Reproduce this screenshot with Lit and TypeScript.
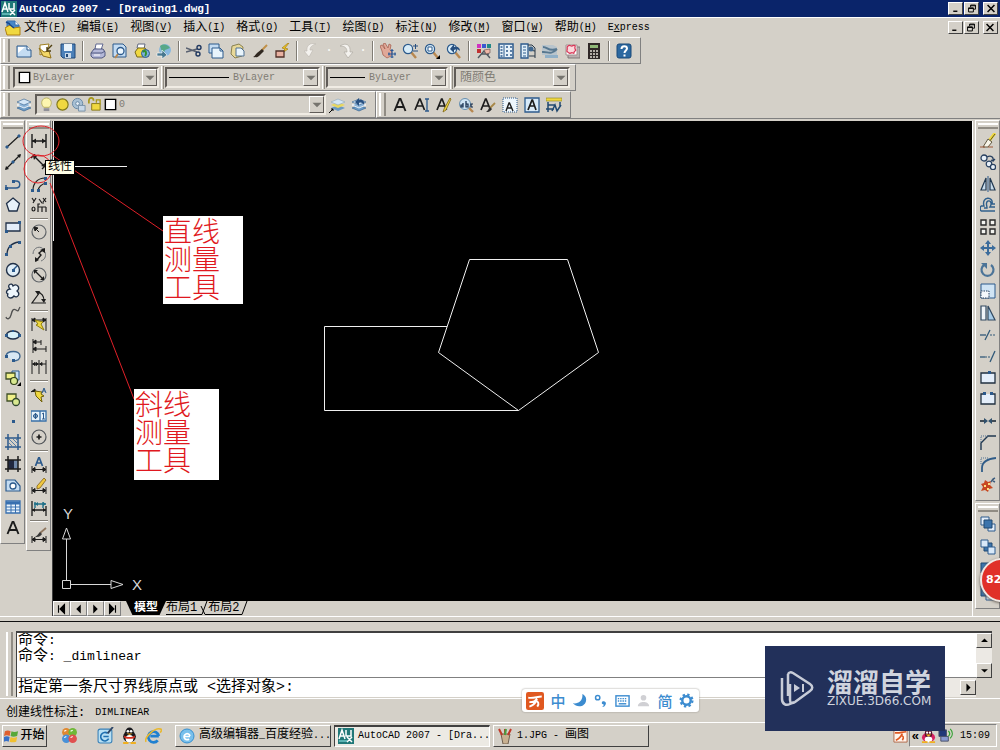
import { LitElement, html, svg, css, nothing, TemplateResult } from "lit";
import { customElement } from "lit/decorators.js";

const B = "#2c5a8c";
const L = "#c4dcf2";
const K = "#1c1c1c";
const Y = "#f0d840";

const dimBase = svg`<path d="M1 9v7M15 9v7M1 12.5h14M4 10.5l-3 2 3 2zM12 10.5l3 2-3 2z" fill="${K}" stroke="${K}"/>`;
const sheet = svg`<path d="M1 3h10l4 4v7H1z" fill="${L}" stroke="${B}"/><path d="M2 4h7l-7 6z" fill="#fff"/><path d="M11 3v4h4" fill="#fff" stroke="${B}"/>`;
const stack = svg`<path d="M1 11l7 3 7-3-7-3z" fill="#6b9ac4" stroke="${B}" stroke-width=".6"/><path d="M1 8l7 3 7-3-7-3z" fill="#8fb5d8" stroke="#fff" stroke-width=".8"/><path d="M1 5l7 3 7-3-7-3z" fill="#d4e6f6" stroke="${B}" stroke-width=".6"/>`;
const lens = svg`<path d="M9 9l5 6" stroke="#b88850" stroke-width="2.4"/><circle cx="6" cy="6" r="4.6" fill="#d8ecf8" stroke="${B}" stroke-width="1.2"/>`;
const letterA = svg`<path d="M2.500 14L7.500 2h1L13.500 14M4.500 10h7" fill="none" stroke="${K}" stroke-width="1.9"/>`;
const smallA = svg`<path d="M1 13L5.500 2h.6L10.500 13M2.800 9h6" fill="none" stroke="${K}" stroke-width="1.7"/>`;
const printer = svg`<path d="M5 6l1-5h7l-2 6z" fill="#fff" stroke="#606890"/><path d="M1 10l3-4h9l2 3v4l-3 2H3l-2-2z" fill="#b4b8d8" stroke="#505880"/><path d="M1 10h11l3-2" fill="none" stroke="#505880"/><path d="M4 12h6" stroke="#fff"/>`;

const ICONS: Record<string, TemplateResult> = {
  cad: svg`<rect width="16" height="16" fill="#207878"/><path d="M1 11L4 2l3 9M2 8h4M8 2v6h5V2M9 9l5 5M9 14l5-5" stroke="#fff" stroke-width="1.5" fill="none"/><path d="M1 13h8" stroke="#9ee"/>`,
  dwg: svg`<path d="M2 1h8l4 4v6H2z" fill="#4888c8" stroke="#3870b0"/><path d="M0 8l5-3 4 3 6-1v8H2z" fill="${Y}" stroke="#b08010"/><path d="M4 4l5 4M1 2l4 2" stroke="#184890" stroke-width="1.500"/><path d="M10 1v4h4" fill="#fff" stroke="#3870b0"/>`,
  newDoc: sheet,
  open: svg`<path d="M2 2l9-1-2 8-7 3z" fill="#fff" stroke="#a08020"/><path d="M1 5l4 8 8 2-2-7-5 1z" fill="#f4d868" stroke="#907018"/><path d="M14 2l-5 5M9 4v4h4" fill="none" stroke="#504010" stroke-width="1.4"/>`,
  save: svg`<path d="M1 1h14v14H3l-2-2z" fill="#4c80b8" stroke="#204878"/><path d="M4 1h8v7H4z" fill="#e8f2fa"/><path d="M5 10h6v5H5z" fill="#c8d8e8"/><path d="M6 11h2v3H6z" fill="#204878"/>`,
  print: printer,
  preview: svg`<path d="M1 1h10l3 3v10H1z" fill="${L}" stroke="${B}"/><path d="M6 11l-3 4" stroke="#b88850" stroke-width="2"/><circle cx="8.500" cy="8" r="3.500" fill="#eef8ff" stroke="${B}" stroke-width="1.300"/>`,
  publish: svg`<path d="M3 5l1-4h7l-1 5z" fill="#fff" stroke="#606880"/><path d="M1 9l3-4h7l2 3v4l-3 2H3z" fill="${Y}" stroke="#786818"/><circle cx="11.500" cy="10.500" r="4" fill="#7cb0dc" stroke="${B}"/><path d="M9 9c3-3 4 2 2 4" stroke="#30902c" fill="none" stroke-width="2"/>`,
  dwf: svg`<circle cx="9" cy="7" r="6" fill="#88b8e0"/><path d="M4 3c4-3 8-1 10 2l-5 2-2 5" fill="#58a888"/><path d="M1 10h5V7l5 5-5 4v-3H1z" fill="#487890" stroke="#fff" stroke-width=".6"/>`,
  cut: svg`<path d="M0 5l11 4M0 9l11-3" stroke="#586070" stroke-width="1.400"/><circle cx="13" cy="4.500" r="2" fill="none" stroke="#203860" stroke-width="1.400"/><circle cx="12" cy="11" r="2" fill="none" stroke="#203860" stroke-width="1.400"/>`,
  copy: svg`<path d="M1 1h10v9H1z" fill="${L}" stroke="${B}"/><path d="M4 5h8l3 3v7H4z" fill="#e8f4fc" stroke="${B}"/><path d="M12 5v3h3" fill="none" stroke="${B}"/>`,
  paste: svg`<path d="M2 3l7-2 4 3-1 9-7 2-4-4z" fill="#e8d898" stroke="#888050"/><path d="M6 5h5l3 3v5H6z" fill="#e8f4fc" stroke="#507090"/>`,
  match: svg`<path d="M15 2l-6 6" stroke="#c09048" stroke-width="2"/><path d="M10 6l2 2-5 5c-2 2-4 1-6 1 2-1 3-3 4-4z" fill="#302820"/>`,
  blockEdit: svg`<path d="M14 0L8 5l3 1-4 5 7-5-3-1 4-5z" fill="#f0c820" stroke="#987010" stroke-width=".6"/><path d="M2 8h8v6H2z" fill="#e8b0a0" stroke="#503028" stroke-width="1.300"/>`,
  undo: svg`<path d="M12 1C6-1 2 3 3 8H0l5 6 4-7H6c0-3 2-5 6-6z" fill="#f4f2ee" stroke="#c0bcb4" stroke-width=".7"/>`,
  redo: svg`<path d="M2 3c6-4 11-1 10 6h3l-5 6-4-6h3c0-4-2-6-7-6z" fill="#f4f2ee" stroke="#b0aca4" stroke-width=".7"/>`,
  pan: svg`<path d="M0 3l2-1 3 4-2-5 2-1 3 5 1-4 2 1-1 5 2 2-1 4-4 2-4-3-1-4z" fill="#e0a898" stroke="#a05848" stroke-width=".7"/><path d="M12 5v9M8 10h8M10.500 6.500h3M10.500 13h3M9 8.500v3M15 8.500v3" stroke="#285898" stroke-width="1.200" transform="translate(0 1)"/>`,
  zoomRt: svg`${lens}<path d="M11 3h5M13.500 1v5M11 8h5" stroke="#285080"/>`,
  zoomWin: svg`${lens}<path d="M4 4h4v4H4z" fill="#fff" stroke="${B}"/><path d="M16 12v4h-4z" fill="#000"/>`,
  zoomPrev: svg`${lens}<path d="M4 6l4-5v3c4-1 6 1 6 4-2-2-4-2-6-1v3z" fill="#285080"/>`,
  props: svg`<path d="M1 1h4v4H1z" fill="#d030c0"/><path d="M6 1h4v4H6z" fill="#3858d0"/><path d="M11 1h4v4h-4z" fill="#208888"/><path d="M1 6h4v4H1z" fill="#c03030"/><path d="M2 15l6-7 6 7M5 11h8" stroke="#505860" stroke-width="1.400" fill="none"/><path d="M8 7l6-1v4l-4 1z" fill="#f0b8a8" stroke="#604848" stroke-width=".6"/>`,
  center: svg`<path d="M1 1h14v14H1z" fill="#e8f2fa" stroke="${B}" stroke-width="1.500"/><path d="M6 2v12" stroke="${B}"/><path d="M2.500 4h2M2.500 7h2M2.500 10h2M2.500 13h2M8 4h2M12 4h2M8 8h2M12 8h2M8 12h2M12 12h2" stroke="${B}" stroke-width="1.500"/>`,
  palettes: svg`<path d="M1 1h7v14H1z" fill="#e0eef8" stroke="${B}" stroke-width="1.300"/><path d="M3 4h3M3 7h3M3 10h3M3 13h3" stroke="${B}"/><path d="M8 2h4l3 3v10M9 7l6 1M9 13h6" stroke="#283848" fill="none"/><circle cx="11" cy="6" r="2.500" fill="#406890"/>`,
  sheetset: svg`<path d="M0 2h11l4 2v8H0z" fill="#b8c4cc"/><path d="M1 4c5 0 5 5 14 2M0 9c6-1 8 4 15-3" stroke="#587890" stroke-width="2" fill="none"/><path d="M3 12h13v3H3z" fill="#90b0c8"/>`,
  markup: svg`<path d="M4 4h12v11H4z" fill="#b8b0b0" stroke="#807878"/><path d="M2 2h11v10H2z" fill="#fff" stroke="#a09090"/><path d="M4 3c2-2 3 1 4 0s4-1 3 1 2 3 0 4 0 3-2 2-3 1-4 0-3-1-2-3-1-3 1-4z" fill="#fad8dc" stroke="#d83858" stroke-width="1.300"/>`,
  calc: svg`<path d="M2 0h12v16H2z" fill="#302828"/><path d="M4 2h8v3H4z" fill="#90b878"/><path d="M4 8h8M4 11h8M4 14h8" stroke="#e0d8d0" stroke-width="1.600" stroke-dasharray="2 1"/>`,
  help: svg`<rect x="1" y="1" width="14" height="14" rx="2" fill="#2c68a0" stroke="#184878"/><path d="M5.500 6c0-4 5.500-3.500 5.500-.5 0 2-2.500 2-2.500 4.500M8.500 11.500v2" fill="none" stroke="#fff" stroke-width="2"/>`,
  layers: stack,
  layerPrev: svg`${stack}<path d="M4 5l4-4v2c4-1 6 2 5 5-1-2-3-3-5-2v3z" fill="#285080"/>`,
  layerCur: svg`<path d="M2 11l7 3 7-3-7-3z" fill="#6b9ac4"/><path d="M2 8l7 3 7-3-7-3z" fill="#e8d860"/><path d="M2 5l7 3 7-3-7-3z" fill="#d4e6f6" stroke="#90a8b8" stroke-width=".6"/><path d="M0 16l4-4M2 12h2v2" stroke="#000" fill="none"/>`,
  bulb: svg`<path d="M5 11C1 7 3 1 8 1s7 6 3 10z" fill="#fdf6b0" stroke="#b8b060"/><path d="M5 12h6v3H5z" fill="#909098"/>`,
  sun: svg`<circle cx="8" cy="8" r="6" fill="${Y}" stroke="#807818" stroke-width="1.200"/>`,
  freeze: svg`<circle cx="7" cy="7" r="5.500" fill="#a8c0d4" stroke="#6888a4"/><circle cx="7" cy="7" r="2" fill="#e8f0f8" stroke="#6888a4"/><path d="M8 9h7v6H8z" fill="#c8d8e8" stroke="#7890a8"/>`,
  lock: svg`<path d="M2 7V4c0-4 5-4 5 0" fill="none" stroke="#a89818" stroke-width="1.800"/><path d="M5 7h9v7H5z" fill="${Y}" stroke="#887818"/><path d="M10 6V3h4v5" fill="none" stroke="#a89818" stroke-width="1.400"/>`,
  white: svg`<path d="M2.500 2.500h11v11h-11z" fill="#fff" stroke="#000" stroke-width="1.500"/>`,
  mtext: letterA,
  dtext: svg`${smallA}<path d="M11 2h4M13 2v12M11 14h4" stroke="${B}" fill="none" stroke-width="1.300"/>`,
  editText: svg`${smallA}<path d="M14 1L8 12l-1 3 3-2 5-11z" fill="${Y}" stroke="#806818" stroke-width=".8"/>`,
  findText: svg`<path d="M10 10l5 5" stroke="#b88850" stroke-width="2.400"/><circle cx="7" cy="7" r="5.500" fill="#d0e4f4" stroke="#6890b0"/><path d="M5 6v4H3V8h2M8 4v6h2V7H8M15 7h-2v3h2" stroke="#102848" stroke-width="1.200" fill="none"/>`,
  styleText: svg`${smallA}<path d="M15 6l-5 5" stroke="#a88848" stroke-width="1.800"/><path d="M10 10l2 2c-2 3-4 3-6 3 2-1 2-3 4-5z" fill="#303030"/>`,
  scaleText: svg`<path d="M1 1h14v14H1z" fill="#eef6fc" stroke="${B}" stroke-dasharray="1 1"/><path d="M4 14l3-8h.5L11 14M5 11h5" stroke="${K}" fill="none" stroke-width="1.400"/>`,
  justText: svg`<path d="M1 1h14v14H1z" fill="#d8eaf8" stroke="${B}" stroke-width="1.300"/><path d="M4 13l4-10h.5L12 13M5 9h6" stroke="${K}" fill="none" stroke-width="1.700"/>`,
  convText: svg`<path d="M0 1h16v3H0z" fill="${Y}" stroke="#888020" stroke-width=".6"/><path d="M2 5v10M14 5v4M2 8h7M0 12h8M6 14l3-6 2 6 4-6" stroke="#204870" stroke-width="1.500" fill="none"/>`,
  line: svg`<path d="M2 14L14 3" stroke="${K}" stroke-width="1.200"/><path d="M1 13h2v2H1zM13 2h2v2h-2z" fill="${B}" stroke="${B}"/>`,
  xline: svg`<path d="M1 15L15 1" stroke="${K}" stroke-width="1.200"/><path d="M0 16l1-4 3 3zM16 0l-1 4-3-3z" fill="${K}"/><path d="M7 7h2v2H7z" fill="${B}" stroke="${B}"/>`,
  pline: svg`<path d="M1 12h10c5 0 5-7 0-7H8M1 12V9" fill="none" stroke="${B}" stroke-width="1.500"/><path d="M0 11h3v3H0zM7 4h3v3H7z" fill="${B}"/>`,
  polygon: svg`<path d="M8 1l6.500 5.500L12 14H4L1.500 6.500z" fill="#e8f2fa" stroke="#203048" stroke-width="1.300"/>`,
  rect: svg`<path d="M1 4h14v8H1z" fill="#e4eefa" stroke="#203048" stroke-width="1.300"/><path d="M0 11h3v3H0zM13 2h3v3h-3z" fill="${B}"/>`,
  arc: svg`<path d="M2 15C2 7 7 3 14 2" fill="none" stroke="#203048" stroke-width="1.300"/><path d="M0 13h3v3H0zM4 5h3v3H4zM13 1h3v3h-3z" fill="${B}"/>`,
  circle: svg`<circle cx="8" cy="8" r="6.500" fill="#e0eef8" stroke="#203048" stroke-width="1.400"/><path d="M8 8l4-4" stroke="${B}" stroke-width="1.400"/><path d="M7 7h3v3H7z" fill="${B}"/>`,
  cloud: svg`<path d="M5 6C1 2 7-1 8 3c4-3 8 2 4 5 4 3 0 8-3 5-3 4-8 1-6-2-3-1-1-5 2-5z" fill="#eef6fc" stroke="#203048" stroke-width="1.300"/>`,
  spline: svg`<path d="M1 12c1 3 4 2 5-2s2-7 5-5 2 0 4-3" fill="none" stroke="#505050" stroke-width="1.300"/>`,
  ellipse: svg`<ellipse cx="8" cy="8" rx="6.500" ry="4" fill="#d8f0f8" stroke="#203048" stroke-width="1.400"/><path d="M0 7h3v3H0zM13 7h3v3h-3zM7 3h2v2H7z" fill="${B}"/>`,
  earc: svg`<path d="M1 8c1-6 14-6 14 0 0 4-4 5-7 5" fill="#d8e8f4" stroke="#406890" stroke-width="1.400"/><path d="M0 7h3v3H0zM7 11h3v3H7z" fill="${B}"/>`,
  insert: svg`<path d="M7 1h7v9H7z" fill="${L}" stroke="${B}"/><path d="M1 3h9v6H1z" fill="#f0f088" stroke="#405028" stroke-width="1.300"/><circle cx="9" cy="11" r="3.500" fill="#d8e890" stroke="#304018" stroke-width="1.200"/><path d="M16 12v4h-4z" fill="#000"/>`,
  block: svg`<path d="M2 3h9v7H2z" fill="#f0f088" stroke="#405028" stroke-width="1.300"/><circle cx="11" cy="11" r="3.500" fill="#d8e890" stroke="#304830" stroke-width="1.300"/>`,
  point: svg`<path d="M7 7h3v3H7z" fill="${B}"/>`,
  hatch: svg`<path d="M3 0v16M13 0v16M0 4h16M0 13h16" stroke="${B}" stroke-width="1.500"/><path d="M4 5l8 8M4 9l4 4M8 5l5 5M11 5l2 2" stroke="#5880a8"/>`,
  gradient: svg`<path d="M3 4h10v9H3z" fill="#7088a8"/><path d="M3 4h6v9H3z" fill="#202840"/><path d="M3 0v16M13 0v16M0 4h16M0 13h16" stroke="${K}" stroke-width="1.500"/>`,
  region: svg`<path d="M1 3h9l5 6v5H1z" fill="${L}" stroke="${B}" stroke-width="1.200"/><circle cx="8" cy="9" r="3" fill="#fff" stroke="${B}" stroke-width="1.300"/>`,
  table: svg`<path d="M1 2h14v12H1z" fill="#eaf4fc" stroke="#3870b0" stroke-width="1.300"/><path d="M1 4h14" stroke="#3870b0" stroke-width="3"/><path d="M1 8h14M1 11h14M6 3v11M10.500 3v11" stroke="#3870b0"/>`,
  dimLin: svg`<path d="M1 1v14M15 1v14M1 8h14" stroke="${K}" stroke-width="1.400"/><path d="M1 8l4-2.500v5zM15 8l-4-2.500v5z" fill="${K}"/>`,
  dimAli: svg`<path d="M3 2l10 10M0 4l4-4M11 15l5-5" stroke="${K}" stroke-width="1.400"/><path d="M2 2h4L3 6zM14 13v-4l-4 3z" fill="${K}"/>`,
  dimArc: svg`<path d="M2 14C2 7 7 2 14 2M7 15c0-4 4-7 8-8" fill="none" stroke="${K}" stroke-width="1.200"/><path d="M0 13h3v3H0zM6 13h3v3H6zM13 1h3v3h-3zM13 6h3v3h-3z" fill="${B}"/>`,
  dimOrd: svg`<path d="M1 1l2 3M5 1L2 6M12 1l3 4M15 1l-3 4M1 12a1.500 2 0 1 0 3 0a1.500 2 0 1 0-3 0M7 15V7h2M8 2l3 4h2M7 10h8M11 15v-5M15 15v-5" fill="none" stroke="${K}" stroke-width="1.200"/>`,
  dimRad: svg`<circle cx="8" cy="8" r="7" fill="none" stroke="#606468" stroke-width="1.200"/><path d="M3 3l5 5M3 3l4 1-3 3z" fill="${K}" stroke="${K}"/>`,
  dimJog: svg`<path d="M2 8C2 1 10-1 13 4M10 15c5-2 5-6 4-9" fill="none" stroke="#707478"/><path d="M13 3L8 7l2 2-5 6" fill="none" stroke="${K}" stroke-width="1.400"/><path d="M14 2v5L9 4zM4 16v-5l4 3z" fill="${K}"/>`,
  dimDia: svg`<circle cx="8" cy="8" r="7" fill="none" stroke="#606468" stroke-width="1.200"/><path d="M4 4l8 8" stroke="${K}" stroke-width="1.300"/><path d="M3 3h4L3 7zM13 13H9l4-4z" fill="${K}"/>`,
  dimAng: svg`<path d="M9 3L1 14h14M6 3c6 1 7 5 7 9" fill="none" stroke="${K}" stroke-width="1.200"/><path d="M4 2l5 0-2 4zM13 14l-3-4h5z" fill="${K}"/>`,
  dimQuick: svg`<path d="M1 2v13M15 2v13M1 4h14M1 4l3-2v4zM15 4l-3-2v4z" fill="${K}" stroke="${K}"/><path d="M4 4l8 2-2 2 3 6-8-5 2-1z" fill="${Y}" stroke="#908010"/>`,
  dimBase: svg`<path d="M2 1v14M10 2v5M15 8v6M2 4h8M2 11h13M2 4l3-2v4zM2 11l3-2v4z" fill="${K}" stroke="${K}"/>`,
  dimCont: svg`<path d="M1 1v14M8 1v14M15 1v14M1 5h14M2 5l2-1.500v3zM7 5L5 3.500v3zM9 5l2-1.500v3z" fill="${K}" stroke="${K}"/>`,
  leader: svg`<path d="M0 5l4-3v2l4 1" fill="${K}" stroke="${K}"/><path d="M4 4l7 1-1 2 3 2-3 1 1 5-6-6z" fill="${Y}" stroke="#706008"/><path d="M11 6l2-5 2 5M12 4h2" stroke="${B}" fill="none"/>`,
  tol: svg`<path d="M0 3h15v10H0zM9 3v10" fill="#e8f2fa" stroke="#3870a8" stroke-width="1.300"/><circle cx="4.500" cy="8" r="2" fill="none" stroke="${B}"/><path d="M4.500 5v6M2 8h5M11 6l1.500-1v6M11 11h3" stroke="${B}" fill="none"/>`,
  mark: svg`<circle cx="8" cy="8" r="7" fill="none" stroke="#505458" stroke-width="1.200"/><path d="M8 5.500v5M5.500 8h5" stroke="${K}" stroke-width="1.700"/>`,
  dimEdit: svg`${dimBase}<path d="M4.500 9L8 0l3.500 9M6 6h4" stroke="${B}" stroke-width="1.700" fill="none"/>`,
  dimTedit: svg`${dimBase}<path d="M13 0L6 8v3l3-1 6-8z" fill="#f0c840" stroke="#705010" stroke-width=".7"/>`,
  dimUpd: svg`<path d="M4 2v6M12 2v6M3 4h12" stroke="#207088" stroke-width="1.400"/><path d="M4 4l3-2v4zM15 4l-3-2v4z" fill="#207088"/><path d="M1 1v15M15 6v10M1 10h14" stroke="${K}" stroke-width="1.300"/><path d="M1 10l3-2v4zM15 10l-3-2v4z" fill="${K}"/>`,
  dimStyle: svg`${dimBase}<path d="M15 1L9 6" stroke="#907860" stroke-width="1.800"/><path d="M9 5l2 2c-2 3-4 3-7 3 2-1 3-3 5-5z" fill="#383838"/>`,
  erase: svg`<path d="M15 0l-6 8" stroke="${Y}" stroke-width="3"/><path d="M15 1l-6 8" stroke="#605820"/><path d="M8 6l4 3-4 5H3z" fill="#f8f4e8" stroke="#605840"/><path d="M0 14h16" stroke="#a05838" stroke-dasharray="5 3"/>`,
  mcopy: svg`<circle cx="4" cy="4" r="3" fill="#e8f0f8" stroke="#284060" stroke-width="1.300"/><circle cx="9" cy="10" r="2.800" fill="#e8f0f8" stroke="#284060" stroke-width="1.200"/><circle cx="13" cy="13" r="2.600" fill="#e8f0f8" stroke="#284060" stroke-width="1.300"/><path d="M7 3c4-2 7 0 6 4l-2-1M13 7l2-2" stroke="#284060" stroke-width="1.300" fill="none"/>`,
  mirror: svg`<path d="M6 2v12H1zM10 2v12h5z" fill="#c8dcec" stroke="#203850" stroke-width="1.200"/><path d="M8 0v16" stroke="${B}"/>`,
  offset: svg`<path d="M1 9h3C1-1 14-1 12 7h3M1 14h14M1 9c-1 1-1 4 0 5M4 11h3c0-3-2-6 1-7s4 3 2 6h5" fill="none" stroke="#30608c" stroke-width="1.400"/>`,
  array: svg`<path d="M1 1h5v5H1zM10 1h5v5h-5zM1 10h5v5H1zM10 10h5v5h-5z" fill="#f4f4f0" stroke="#282828" stroke-width="1.400"/>`,
  move: svg`<path d="M8 0l3 4H9v3h3V5l4 3-4 3V9H9v3h2l-3 4-3-4h2V9H4v2L0 8l4-3v2h3V4H5z" fill="#3c6c9c"/>`,
  rotate: svg`<path d="M4 3a6 6 0 1 0 7 0" fill="none" stroke="#4c7498" stroke-width="2.200"/><path d="M1 1h6v6z" fill="#4c7498"/>`,
  scale: svg`<path d="M1 1h14v14H1z" fill="#d0e4f4" stroke="${B}"/><path d="M1 8h8v7H1z" fill="#f4f8fc" stroke="#284060" stroke-dasharray="1.500 1"/>`,
  stretch: svg`<path d="M1 1h5v14H1z" fill="#f0f4f8" stroke="#304860" stroke-width="1.200"/><path d="M8 1l7 14H8z" fill="#a8cce8" stroke="#304860" stroke-width="1.200"/>`,
  trim: svg`<path d="M0 8h6" stroke="#305878" stroke-width="1.300"/><path d="M10 8h6" stroke="#305878" stroke-dasharray="2 1"/><path d="M10 3L5 13" stroke="#305878" stroke-width="1.300"/>`,
  extend: svg`<path d="M0 9h5" stroke="#305878" stroke-width="1.300"/><path d="M5 9h6" stroke="#305878" stroke-dasharray="2 1"/><path d="M15 3l-5 11" stroke="#305878" stroke-width="1.300"/>`,
  breakPt: svg`<path d="M1 3h14v10H1z" fill="#e4eefa" stroke="#203040" stroke-width="1.300"/><path d="M8 1h3v3H8z" fill="${B}"/>`,
  breakIt: svg`<path d="M4 3H1v10h14V3h-3" fill="#e4eefa" stroke="#203040" stroke-width="1.300"/><path d="M3 1h3v3H3zM10 1h3v3h-3z" fill="${B}"/>`,
  join: svg`<path d="M0 8h6M10 8h6" stroke="#102030" stroke-width="1.500"/><path d="M4 5l4 3-4 3zM12 5L8 8l4 3z" fill="#30506c"/>`,
  chamfer: svg`<path d="M1 16V9l7-7h8" fill="none" stroke="#203850" stroke-width="1.400"/><path d="M1 8V2h7" fill="none" stroke="#507090" stroke-dasharray="1 1"/>`,
  fillet: svg`<path d="M2 16V12c0-6 4-9 14-10" fill="none" stroke="#305c88" stroke-width="1.800"/><path d="M1 8V2h7" fill="none" stroke="#507090" stroke-dasharray="1 1"/>`,
  explode: svg`<path d="M1 7l3-1 1-3 3 2 3-1-1 4 3 3-4 1-1 3-3-2-4 1 2-4z" fill="#c84820"/><path d="M4 8h2v2H4zM8 6h2v2H8zM7 11h2v2H7z" fill="#ffe080"/><path d="M11 5l2-3 2-1M13 4l2 1" stroke="#406080" stroke-width="1.500"/>`,
  front: svg`<path d="M1 1h8v8H1zM8 8h7v7H8z" fill="#e4eefa" stroke="${B}"/><path d="M4 4h8v8H4z" fill="#3c74ac" stroke="#204870"/>`,
  back: svg`<path d="M4 4h8v8H4z" fill="#3c74ac" stroke="#204870"/><path d="M1 1h7v7H1zM8 8h7v7H8z" fill="#d8e8f8" stroke="${B}"/>`,
  above: svg`<path d="M1 1h12v10H1z" fill="#3c74ac" stroke="#204870"/><path d="M6 8h9v7H6z" fill="#d8e8f8" stroke="${B}"/>`,
  winStart: svg`<path d="M1 3c2-1 4-1 6 0L6 8c-2-1-4-1-6 0z" fill="#e06030"/><path d="M8 3c2 1 4 1 7 0l-1 5c-3 1-5 1-7 0z" fill="#58a838"/><path d="M0 9c2-1 4-1 6 0l-1 5c-2-1-3-1-5 0z" fill="#3870c8"/><path d="M7 9c2 1 4 1 7 0l-1 5c-3 1-5 1-7 0z" fill="#f0c030"/>`,
  balls: svg`<circle cx="5" cy="5" r="4" fill="#e08830"/><circle cx="11" cy="5" r="4" fill="#70b838"/><circle cx="5" cy="11" r="4" fill="#4890d8"/><circle cx="11" cy="11" r="4" fill="#e05050"/><path d="M3 4l2-1M9 4l2-1M3 10l2-1M9 10l2-1" stroke="#fff"/>`,
  desktop: svg`<rect x="1" y="2" width="13" height="13" rx="2" fill="#b8e0f4" stroke="#3880b8"/><path d="M10 6a4 4 0 1 0 1 5M6 9h5" fill="none" stroke="#2070b0" stroke-width="1.500"/><path d="M15 0l-5 6" stroke="#304868" stroke-width="1.800"/>`,
  qq: svg`<ellipse cx="8" cy="9" rx="6" ry="5.500" fill="#18181c"/><ellipse cx="8" cy="5" rx="4" ry="4.500" fill="#18181c"/><ellipse cx="8" cy="11" rx="3.600" ry="3.500" fill="#fff"/><circle cx="6.500" cy="4" r="1.200" fill="#fff"/><circle cx="9.500" cy="4" r="1.200" fill="#fff"/><path d="M5 6h6l-3 1.500z" fill="#f0a820"/><path d="M3 8c3 2 7 2 10 0v2c-3 1.500-7 1.500-10 0z" fill="#d83020"/><path d="M2 14h5v2H2zM9 14h5v2H9z" fill="#f0b020"/>`,
  qqTray: svg`<ellipse cx="8" cy="10" rx="7" ry="5" fill="#d82060"/><ellipse cx="8" cy="6" rx="4" ry="5" fill="#58102c"/><ellipse cx="8" cy="12" rx="4" ry="3" fill="#fff"/><circle cx="6.500" cy="5" r="1.200" fill="#fff"/><circle cx="9.500" cy="5" r="1.200" fill="#fff"/><path d="M5 7h6l-3 2z" fill="#f8c020"/><path d="M1 14h6v2H1zM9 14h6v2H9z" fill="#f0b020"/>`,
  ie: svg`<path d="M13 8.500H5M13 8.500a5 5 0 1 0-1 4" fill="none" stroke="#2080d0" stroke-width="2.600"/><path d="M1 14C-1 10 9 0 15 2c1 1 0 3-1 3" fill="none" stroke="#e8b830" stroke-width="1.500"/>`,
  ebrowser: svg`<circle cx="8" cy="8" r="7" fill="#78c0ec" stroke="#3890d0"/><path d="M11 8.500H5M11 8a3 3 0 1 0-1 3" fill="none" stroke="#fff" stroke-width="1.700"/>`,
  paint: svg`<path d="M4 6h9l-2 10H6z" fill="#c8b090" stroke="#706050"/><path d="M5 7L2 1M8 7V1M11 7l3-6" stroke-width="2" stroke="#c03828"/><path d="M8 7l1-6" stroke="#48a040" stroke-width="2"/>`,
  sogou: svg`<rect width="16" height="16" rx="2" fill="#e05820"/><path d="M2 5c4 1 8-1 12-1M3 9c4 0 5-1 7-3M8 8c3 0 4 2 2 5M3 13c3-1 5-3 6-5" stroke="#fff" stroke-width="1.700" fill="none"/>`,
  sogouTray: svg`<path d="M1 1h14v14H1z" fill="#fff4ec" stroke="#b06848"/><path d="M2 5c4 1 8-1 12-1M3 13c3-1 5-3 7-7M8 8c3 0 4 2 2 5" stroke="#e05820" stroke-width="1.700" fill="none"/>`,
  moon: svg`<path d="M11 1c1 7-4 11-10 10 5 6 15 3 14-5 0-2-2-4-4-5z" fill="#3c8cd0"/>`,
  punct: svg`<circle cx="5" cy="5" r="2.300" fill="none" stroke="#3c8cd0" stroke-width="1.600"/><path d="M10 9c3-1 5 2 3 4-1 2-3 2-3 1 1 0 2-1 1-2-2 0-2-2-1-3z" fill="#3c8cd0"/>`,
  keys: svg`<rect x="1" y="3" width="14" height="11" fill="none" stroke="#3c8cd0" stroke-width="1.500"/><path d="M3 6h10M3 8.500h10" stroke="#3c8cd0" stroke-width="1.500" stroke-dasharray="1.500 1"/><path d="M4 11.500h8" stroke="#3c8cd0" stroke-width="1.500"/>`,
  person: svg`<circle cx="8" cy="5" r="3" fill="#d0d0d4"/><path d="M2 14c0-6 12-6 12 0z" fill="#d0d0d4"/>`,
  gear: svg`<circle cx="8" cy="8" r="6.300" fill="none" stroke="#3c8cd0" stroke-width="2.400" stroke-dasharray="2.500 2.450"/><circle cx="8" cy="8" r="4.500" fill="none" stroke="#3c8cd0" stroke-width="2.600"/>`,
  net: svg`<path d="M1 2h8v7H1z" fill="#203878" stroke="#485068"/><path d="M3 9h8v5H3z" fill="#8898d0" stroke="#485068"/><path d="M11 3c2 2 2 4 0 6M13 1c3 3 3 7 0 10" fill="none" stroke="#30a030" stroke-width="1.300"/>`,
  min: svg`<path d="M4 12h6" stroke="#000" stroke-width="2"/>`,
  restore: svg`<path d="M6 3h7v6h-2M6 3v3M3 7h7v6H3zM3 8h7M6 4h7" fill="none" stroke="#000" stroke-width="1.400"/>`,
  close: svg`<path d="M3 3l10 10M13 3L3 13" stroke="#000" stroke-width="2.200"/>`,
  first: svg`<path d="M4 3v10M12 2L6 8l6 6z" stroke="#000" stroke-width="1.500"/>`,
  prev: svg`<path d="M11 2L5 8l6 6z"/>`,
  next: svg`<path d="M5 2l6 6-6 6z"/>`,
  last: svg`<path d="M12 3v10M4 2l6 6-6 6z" stroke="#000" stroke-width="1.500"/>`,
  up: svg`<path d="M3 10l5-5 5 5z"/>`,
  down: svg`<path d="M3 6l5 5 5-5z"/>`,
  dim: svg`<path d="M2 5l6 6 6-6z" fill="#76746e"/>`,
};

const icon = (name: string) =>
  html`<svg class="icon" viewBox="0 0 16 16" aria-hidden="true">${ICONS[name]}</svg>`;

const STANDARD = "newDoc open save | print preview publish dwf | cut copy paste match blockEdit | undo . redo . | pan zoomRt zoomWin zoomPrev | props center palettes sheetset markup calc | help";
const TEXT = "mtext dtext editText findText styleText scaleText justText convText";
const DRAW = "line xline pline polygon rect arc circle cloud spline ellipse earc insert block point hatch gradient region table mtext";
const DIMENSION = "dimLin dimAli dimArc dimOrd | dimRad dimJog dimDia dimAng | dimQuick dimBase dimCont | leader tol mark | dimEdit dimTedit dimUpd | dimStyle";
const MODIFY = "erase mcopy mirror offset array move rotate scale stretch trim extend breakPt breakIt join chamfer fillet explode";
const ORDER = "front back above above";

const MENU = [
  ["文件", "F"], ["编辑", "E"], ["视图", "V"], ["插入", "I"], ["格式", "O"], ["工具", "T"],
  ["绘图", "D"], ["标注", "N"], ["修改", "M"], ["窗口", "W"], ["帮助", "H"],
];

@customElement("app-root")
export class AppRoot extends LitElement {
  static styles = css`
    * { box-sizing: border-box; }
    :host {
      display: flex; flex-direction: column; position: relative;
      height: 100vh; overflow: hidden; background: #d4d0c8; color: #000;
      font: 12px/14px "Liberation Mono", "Noto Sans CJK SC", monospace;
    }
    button, select, input { font: inherit; color: inherit; margin: 0; padding: 0; border: 0; background: none; border-radius: 0; }
    button { display: flex; align-items: center; justify-content: center; }
    .icon { display: block; width: 16px; height: 16px; flex: none; }
    .latin { font-size: 10px; }
    .title { display: flex; align-items: center; height: 17px; padding: 0 2px 0 1px; gap: 2px; background: #0a246a; color: #fff; flex: none; }
    .title h1 { font: bold 11px/16px "Liberation Mono", monospace; margin: 0; flex: 1; white-space: pre; }
    .wins { display: flex; gap: 1px; }
    .win { width: 15px; height: 13px; background: #d4d0c8; border: 1px solid; border-color: #fff #404040 #404040 #fff; }
    .win .icon { width: 12px; height: 11px; }
    .win:last-child { margin-left: 3px; }
    .menu { display: flex; align-items: center; height: 20px; padding: 0 2px 0 5px; border-top: 1px solid #fff; flex: none; }
    .menu nav { display: flex; flex: 1; gap: 10px; padding-left: 3px; }
    .menu button { white-space: nowrap; padding-right: 1px; }
    .menu u { text-underline-offset: 1px; }
    .row { display: flex; height: 27px; flex: none; }
    .bar { display: flex; align-items: center; border: 1px solid; border-color: #fff #808080 #808080 #fff; padding-right: 5px; }
    .grip { width: 7px; align-self: stretch; margin: 1px 3px 1px 2px; border: solid; border-width: 0 2px; border-color: #fff #908c84 #908c84 #fff; border-style: double; flex: none; }
    .grip.slim { width: 3px; margin: 1px 1px 1px 2px; border-width: 0 1px; border-style: solid; }
    .tool { width: 22px; height: 22px; flex: none; }
    .dot { width: 12px; text-align: center; color: #f8f8f4; font-weight: bold; flex: none; }
    .sep { width: 1px; height: 20px; margin: 0 4px 0 3px; background: #807c74; box-shadow: 1px 0 #fff; flex: none; }
    .combo { display: flex; align-items: center; height: 21px; padding-left: 2px; gap: 1px; border: 2px solid; border-color: #605c58 #f0ece4 #f0ece4 #605c58; color: #807c74; flex: none; }
    .combo select { appearance: none; flex: 1; min-width: 0; opacity: 1; color: #807c74; font-size: 10px; line-height: 14px; }
    .combo.c-plot select { font-size: 12px; padding-left: 2px; }
    .combo .icon { width: 15px; height: 15px; }
    .drop { width: 15px; align-self: stretch; background: #d4d0c8; border: 1px solid; border-color: #fff #605c58 #605c58 #fff; display: flex; align-items: center; justify-content: center; }
    .combo .drop .icon { width: 12px; height: 12px; }
    .rule { height: 1px; background: #000; flex: none; }
    .c-color { width: 146px; }
    .c-type { width: 155px; }
    .c-weight { width: 122px; }
    .c-plot { width: 116px; }
    .c-layer { width: 291px; }
    .r-type { width: 60px; margin-right: 3px; }
    .r-weight { width: 35px; margin-right: 3px; }
    .work { position: relative; display: flex; flex: 1; min-height: 0; padding-top: 1px; border-top: 1px solid #808080; overflow: hidden; }
    .vbar { display: flex; flex-direction: column; align-items: center; width: 25px; border: 1px solid; border-color: #fff #808080 #808080 #fff; padding-bottom: 4px; }
    .vbar .tool { flex: 1; height: auto; min-height: 0; }
    .vbar .sep { width: 18px; height: 1px; margin: 2px 0 3px; box-shadow: 0 1px #fff; }
    .vbar .grip { width: 20px; height: 6px; margin: 2px 0 1px; border-width: 2px 0; align-self: center; }
    .draw { height: 424px; }
    .dims { height: 431px; margin-left: 1px; }
    .modify { height: 381px; }
    .order { height: 106px; margin-top: 2px; }
    .right { margin-left: 2px; width: 25px; flex: none; }
    .view { display: flex; flex-direction: column; flex: 1; min-width: 0; margin: 1px 0 0 1px; border-left: 1px solid #404040; border-right: 1px solid #fff; }
    .canvas { flex: 1; width: 100%; min-height: 0; display: block; background: #000; }
    .axis { font: 15px "Liberation Sans", sans-serif; fill: #d8d8d8; }
    .tabs { display: flex; height: 15px; flex: none; }
    .nav { width: 17px; height: 15px; border: 1px solid; border-color: #fff #808080 #808080 #fff; }
    .nav .icon { width: 13px; height: 12px; }
    .model { width: 40px; margin-left: 5px; background: #000; color: #fff; height: 14px; font-weight: bold; clip-path: polygon(0 0, 100% 0, 84% 100%, 16% 100%); }
    .tab { height: 14px; border-bottom: 1px solid #000; white-space: nowrap; }
    .slant { width: 11px; height: 14px; }
    .notes { position: absolute; left: 0; top: 0; width: 100%; height: 100%; pointer-events: none; }
    .note { position: absolute; margin: 0; padding: 0 1px; background: #fff; color: #e01820; font: 300 28px/28px "Noto Sans CJK SC", sans-serif; }
    .note-a { left: 163px; top: 97px; width: 80px; height: 88px; }
    .note-b { left: 134px; top: 270px; width: 85px; height: 91px; }
    .tip { position: absolute; left: 45px; top: 41px; height: 15px; padding: 0 2px; border: 1px solid #000; background: #ffffe8; line-height: 13px; }
    .badge { position: absolute; right: -24px; bottom: 14px; width: 44px; height: 44px; border-radius: 50%; border: 2px solid #f0e8e4; background: #e03028; color: #fff; font: bold 11px/40px "DejaVu Sans", sans-serif; padding-left: 4px; box-shadow: 0 1px 3px #605850; }
    .command { display: flex; height: 82px; padding: 10px 8px 0 6px; border-top: 1px solid #fff; flex: none; position: relative; box-shadow: inset 0 4px #d4d0c8, inset 0 5px #101010; }
    .command .grip { width: 7px; margin: 5px 3px 2px 0; }
    .box { flex: 1; display: grid; grid-template-columns: 1fr 16px; grid-template-rows: 45px 19px; align-self: end; margin-bottom: 1px; border: 1px solid #404040; border-width: 2px 0 0 1px; background: #fff; font-size: 15px; line-height: 16px; }
    .history { padding-left: 1px; border-bottom: 1px solid #808080; overflow: hidden; }
    .history p, .prompt { margin: 0; white-space: pre; }
    .mono { font-size: 13px; }
    .prompt { display: flex; padding-left: 1px; line-height: 18px; align-items: center; }
    .prompt label { flex: none; }
    .prompt input { flex: 1; min-width: 0; height: 16px; outline: none; }
    .vscroll { display: flex; flex-direction: column; justify-content: space-between; background: #ece9e4; }
    .arrow { width: 16px; height: 15px; background: #d4d0c8; border: 1px solid; border-color: #fff #404040 #404040 #fff; }
    .arrow .icon { width: 11px; height: 11px; }
    .hscroll { display: flex; align-items: center; justify-content: flex-end; align-self: stretch; width: 34px; background: #ece9e4; }
    .blank { background: #d4d0c8; }
    .status { display: flex; align-items: center; gap: 10px; height: 24px; padding: 4px 6px 0; border-top: 1px solid #fff; flex: none; }
    .taskbar { display: flex; align-items: center; height: 28px; padding: 0 3px 2px 2px; border-top: 1px solid #fff; flex: none; }
    .start { width: 45px; height: 22px; gap: 1px; border: 1px solid; border-color: #fff #404040 #404040 #fff; font-weight: 500; white-space: nowrap; }
    .start .icon { width: 15px; }
    .quick { display: flex; align-items: center; gap: 7px; margin-left: 10px; padding: 0 13px 0 0; }
    .quick .icon { width: 17px; height: 17px; }
    .quick button:first-child { margin: 0 12px 0 4px; }
    .tasks { display: flex; gap: 3px; flex: 1; min-width: 0; }
    .task { width: 156px; height: 22px; gap: 4px; padding-left: 3px; justify-content: flex-start; white-space: nowrap; overflow: hidden; border: 1px solid; border-color: #fff #404040 #404040 #fff; }
    .task.on { background: #eceae4; border-color: #404040 #fff #fff #404040; border-top-width: 2px; }
    .tray { display: flex; align-items: center; gap: 1px; height: 23px; }
    .well { display: flex; align-items: center; gap: 2px; height: 23px; padding: 0 6px 0 2px; border: 1px solid; border-color: #808080 #fff #fff #808080; }
    .well time { padding-left: 5px; font-size: 10px; }
    .well b { font: bold 13px/14px "Liberation Sans", sans-serif; }
    .tray .icon { width: 15px; height: 15px; }
    .ime { position: absolute; left: 522px; bottom: 38px; display: flex; align-items: center; justify-content: space-between; width: 177px; height: 23px; padding: 0 5px 0 4px; border-radius: 3px; background: #fff; color: #3c8cd0; box-shadow: 0 0 2px #908c84; font: 500 15px/20px "Noto Sans CJK SC", sans-serif; }
    .ime button:first-child .icon { width: 18px; height: 18px; }
    .ime .icon { width: 15px; height: 15px; }
    .brand { position: absolute; right: 55px; bottom: 19px; width: 180px; height: 85px; display: flex; align-items: center; gap: 13px; padding: 0 0 4px 15px; background: #22305a; color: #d0d4de; }
    .logo { width: 34px; height: 36px; flex: none; margin-top: 4px; }
    .brand strong { display: block; font: 700 26px/28px "Noto Sans CJK SC", sans-serif; }
    .brand small { display: block; font: 12px/12px "DejaVu Sans", sans-serif; }
  `;

  private tools(list: string) {
    return list.split(" ").map((n) =>
      n === "|" ? html`<span class="sep"></span>`
        : n === "." ? html`<span class="dot">·</span>`
        : html`<button class="tool" aria-label=${n}>${icon(n)}</button>`);
  }

  private windowButtons() {
    return html`<div class="wins">${["min", "restore", "close"].map((n) => html`<button class="win" aria-label=${n}>${icon(n)}</button>`)}</div>`;
  }

  private combo(cls: string, label: string, value: string, lead: unknown = nothing) {
    return html`<div class="combo ${cls}">${lead}<select aria-label=${label} disabled><option>${value}</option></select><span class="drop">${icon("dim")}</span></div>`;
  }

  render() {
    return html`
      <header class="title">${icon("cad")}<h1>AutoCAD 2007 - [Drawing1.dwg]</h1>${this.windowButtons()}</header>
      <div class="menu">${icon("dwg")}
        <nav>${MENU.map(([t, k]) => html`<button>${t}<span class="latin">(<u>${k}</u>)</span></button>`)}<button class="latin">E<u>x</u>press</button></nav>
        ${this.windowButtons()}
      </div>
      <div class="row"><div class="bar"><span class="grip"></span>${this.tools(STANDARD)}</div></div>
      <div class="row"><div class="bar"><span class="grip"></span>
        ${this.combo("c-color", "颜色", "ByLayer", icon("white"))}<span class="grip slim"></span>
        ${this.combo("c-type", "线型", "ByLayer", html`<span class="rule r-type"></span>`)}<span class="grip slim"></span>
        ${this.combo("c-weight", "线宽", "ByLayer", html`<span class="rule r-weight"></span>`)}<span class="grip slim"></span>
        ${this.combo("c-plot", "打印样式", "随颜色")}
      </div></div>
      <div class="row">
        <div class="bar"><span class="grip"></span>${this.tools("layers")}
          ${this.combo("c-layer", "图层", "0", ["bulb", "sun", "freeze", "lock", "white"].map(icon))}
          ${this.tools("layerCur layerPrev")}</div>
        <div class="bar"><span class="grip"></span>${this.tools(TEXT)}</div>
      </div>
      <main class="work">
        <div class="vbar draw"><span class="grip"></span>${this.tools(DRAW)}</div>
        <div class="vbar dims"><span class="grip"></span>${this.tools(DIMENSION)}</div>
        <section class="view">
          <svg class="canvas" fill="none" stroke="#f0f0f0">
            <path d="M0.500 0v120M22 45.500h52" />
            <path d="M394 205.500H271.500v84h194" />
            <path d="M416.500 138.500h98l31 93-80 58-80-58z" />
            <path d="M9.500 459.500h8v8h-8zM13.500 459v-41M17 463.500h41M9.500 418l4-11 4 11zM58 459.500l12 4-12 4z" stroke="#d8d8d8" />
            <g stroke="none"><text class="axis" x="10" y="398">Y</text><text class="axis" x="79" y="469">X</text></g>
          </svg>
          <div class="tabs">
            ${["first", "prev", "next", "last"].map((n) => html`<button class="nav" aria-label=${n}>${icon(n)}</button>`)}
            <button class="model">模型</button>
            <button class="tab">布局1</button>
            <svg class="slant" viewBox="0 0 11 14" fill="none" stroke="#000"><path d="M10 0L5 13.500H0M4 5l4 8.500h3" /></svg>
            <button class="tab">布局2</button>
            <svg class="slant" viewBox="0 0 11 14" fill="none" stroke="#000"><path d="M8 0L3 13.500H0" /></svg>
          </div>
        </section>
        <div class="right">
          <div class="vbar modify"><span class="grip"></span>${this.tools(MODIFY)}</div>
          <div class="vbar order"><span class="grip"></span>${this.tools(ORDER)}</div>
        </div>
        <svg class="notes" fill="none" stroke="#e02028">
          <ellipse cx="41" cy="22" rx="18" ry="15" /><ellipse cx="38" cy="50" rx="14" ry="14" />
          <path d="M52 36L163 112M50 64L134 280" />
        </svg>
        <p class="note note-a">直线<br />测量<br />工具</p>
        <p class="note note-b">斜线<br />测量<br />工具</p>
        <span class="tip" role="tooltip">线性</span>
        <span class="badge">82</span>
      </main>
      <section class="command"><span class="grip"></span>
        <div class="box">
          <div class="history"><p>命令<span class="mono">:</span></p><p>命令<span class="mono">: _dimlinear</span></p></div>
          <div class="vscroll"><button class="arrow" aria-label="up">${icon("up")}</button><button class="arrow" aria-label="down">${icon("down")}</button></div>
          <div class="prompt"><label for="cmd">指定第一条尺寸界线原点或 &lt;选择对象&gt;:</label><input id="cmd" /><div class="hscroll"><button class="arrow" aria-label="right">${icon("next")}</button></div></div>
          <div class="blank"></div>
        </div>
      </section>
      <div class="status"><span>创建线性标注:</span><span class="latin">DIMLINEAR</span></div>
      <footer class="taskbar">
        <button class="start">${icon("winStart")}开始</button>
        <div class="quick">${["balls", "desktop", "qq", "ie"].map((n) => html`<button aria-label=${n}>${icon(n)}</button>`)}</div>
        <div class="tasks">
          <button class="task">${icon("ebrowser")}<span>高级编辑器<span class="latin">_</span>百度经验<span class="latin">...</span></span></button>
          <button class="task on">${icon("cad")}<span class="latin">AutoCAD 2007 - [Dra...</span></button>
          <button class="task">${icon("paint")}<span><span class="latin">1.JPG - </span>画图</span></button>
        </div>
        <div class="tray">${icon("sogouTray")}<div class="well"><b>«</b>${icon("qqTray")}${icon("net")}<time>15:09</time></div></div>
      </footer>
      <div class="ime"><button aria-label="sogou">${icon("sogou")}</button><button>中</button>${["moon", "punct", "keys", "person"].map((n) => html`<button aria-label=${n}>${icon(n)}</button>`)}<button>简</button><button aria-label="gear">${icon("gear")}</button></div>
      <aside class="brand">
        <svg class="logo" viewBox="0 0 34 36" fill="none" stroke="#c8ccd8" stroke-width="2.500"><path d="M8 3c1-2 3-2 5-1l17 11c3 2 3 5 0 7L15 31c-3 2-5 1-5-2V13" /><path d="M8 3v22M2 7v21c0 5 4 7 8 5l4-2" /><path d="M14 13l6 4-6 4z" fill="#c8ccd8" stroke="none" /><path d="M23 13v8" stroke-width="2" /></svg>
        <div><strong>溜溜自学</strong><small>ZIXUE.3D66.COM</small></div>
      </aside>
    `;
  }
}
